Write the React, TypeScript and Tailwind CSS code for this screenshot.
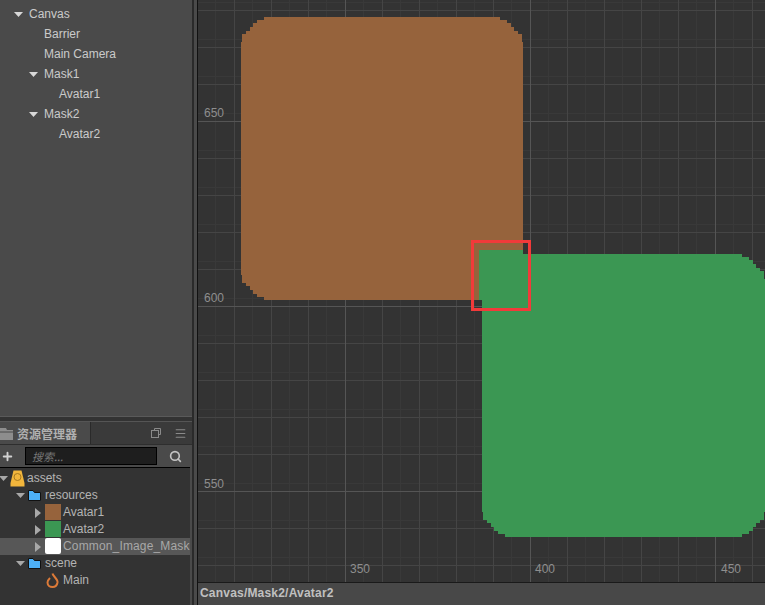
import { Menu, Plus, Search } from 'lucide-react';

const canvasW = 567;
const canvasH = 582;
const left = 198;

// stair offsets of the low-res sprite corner, in screen pixels
const stairs: [number, number][] = [
  [0, 25],
  [1, 17],
  [5, 14],
  [9, 10],
  [12, 6],
  [16, 3],
  [23, 0],
];

const spritePoints = (x: number, y: number, w: number, h: number) => {
  const tl: string[] = [];
  const tr: string[] = [];
  const br: string[] = [];
  const bl: string[] = [];
  stairs.forEach(([dx, dy], i) => {
    const next = stairs[i + 1];
    tl.push(`${x + dx},${y + dy}`);
    tr.push(`${x + w - dx},${y + dy}`);
    br.push(`${x + w - dx},${y + h - dy}`);
    bl.push(`${x + dx},${y + h - dy}`);
    if (next) {
      tl.push(`${x + next[0]},${y + dy}`);
      tr.push(`${x + w - next[0]},${y + dy}`);
      br.push(`${x + w - next[0]},${y + h - dy}`);
      bl.push(`${x + next[0]},${y + h - dy}`);
    }
  });
  return [...tl, ...tr.reverse(), ...br, ...bl.reverse()].join(' ');
};

const range = (start: number, end: number, step: number) => {
  const out: number[] = [];
  for (let v = start; v < end; v += step) out.push(v);
  return out;
};

const SceneDrawing = () => (
  <svg width={canvasW} height={canvasH} viewBox={`${left} 0 ${canvasW} ${canvasH}`} shapeRendering="crispEdges" className="absolute inset-0">
    {range(215.5, 765, 37).map((x) => (
      <line key={`sx${x}`} x1={x} x2={x} y1={0} y2={canvasH} stroke="#393939" />
    ))}
    {range(2.5, 583, 37).map((y) => (
      <line key={`sy${y}`} x1={left} x2={765} y1={y} y2={y} stroke="#393939" />
    ))}
    {range(197, 765, 37).map((x) => (
      <line key={`mx${x}`} x1={x + 37} x2={x + 37} y1={0} y2={canvasH} stroke="#454545" />
    ))}
    {range(10, 583, 37).map((y) => (
      <line key={`my${y}`} x1={left} x2={765} y1={y} y2={y} stroke="#454545" />
    ))}
    {[345, 530, 715].map((x) => (
      <line key={`Mx${x}`} x1={x} x2={x} y1={0} y2={canvasH} stroke="#555555" />
    ))}
    {[121, 306, 491].map((y) => (
      <line key={`My${y}`} x1={left} x2={765} y1={y} y2={y} stroke="#555555" />
    ))}
    <polygon points={spritePoints(241, 17, 282, 283)} fill="#96633c" />
    <polygon points={spritePoints(482, 254, 283, 283)} fill="#3b9753" />
    <rect x={479} y={250} width={44} height={50} fill="#3b9753" />
  </svg>
);

const ArrowDown = ({ className, style }: { className: string; style?: { left: number } }) => (
  <svg width="9" height="5" viewBox="0 0 9 5" className={className} style={style}>
    <path d="M0 0H9L4.5 5Z" fill="currentColor" />
  </svg>
);

const ArrowRight = () => (
  <svg width="6" height="10" viewBox="0 0 6 10" className="absolute left-[35px] top-[4px] text-[#a8a8a8]">
    <path d="M0 0L6 5L0 10Z" fill="currentColor" />
  </svg>
);

const FolderIcon = () => (
  <svg width="13" height="11" viewBox="0 0 13 11" className="absolute left-[28px] top-[3px]">
    <path d="M0.5 10.5V0.5H5L6.5 2.5H12.5V10.5Z" fill="#4db0f7" stroke="#111" />
  </svg>
);

const hierarchy = [
  { label: 'Canvas', indent: 29, open: true },
  { label: 'Barrier', indent: 44 },
  { label: 'Main Camera', indent: 44 },
  { label: 'Mask1', indent: 44, open: true },
  { label: 'Avatar1', indent: 59 },
  { label: 'Mask2', indent: 44, open: true },
  { label: 'Avatar2', indent: 59 },
];

const HierarchyPanel = () => (
  <div className="h-[417px] bg-[#4a4a4a] border-b border-[#5a5a5a] pt-[4px]">
    {hierarchy.map((row) => (
      <div key={row.label} className="relative h-[20px] leading-[20px] text-[12px] text-[#cacaca]" style={{ paddingLeft: row.indent }}>
        {row.open && <ArrowDown className="absolute top-[8px] text-[#d8d8d8]" style={{ left: row.indent - 15 }} />}
        {row.label}
      </div>
    ))}
  </div>
);

const SpriteRow = ({ label, color, selected }: { label: string; color: string; selected?: boolean }) => (
  <div className={`relative h-[17px] leading-[17px] pl-[63px] whitespace-nowrap overflow-hidden ${selected ? 'bg-[#575757] text-[#a8a8a8] tracking-[0.15px]' : ''}`}>
    <ArrowRight />
    <span className={`absolute left-[45px] top-0 w-[16px] h-[16px] ${selected ? 'rounded-[2px]' : ''}`} style={{ backgroundColor: color }} />
    {label}
  </div>
);

const AssetsPanel = () => (
  <div className="flex-1 flex flex-col min-h-0 mt-[4px] bg-[#4a4a4a]">
    <div className="h-[23px] flex bg-[#3a3a3a] border-t border-[#555555]">
      <div className="w-[91px] h-[23px] bg-[#4a4a4a] border-r border-[#2a2a2a] flex items-center gap-[4px] text-[12px] font-bold text-[#b0b0b0] whitespace-nowrap [font-family:'Noto_Sans_CJK_SC','Liberation_Sans',sans-serif]">
        <svg width="13" height="13" viewBox="0 0 13 13">
          <path d="M0 1H6L7 3H13V13H0Z" fill="#8d8d8d" />
          <path d="M0 5H13" stroke="#4a4a4a" />
        </svg>
        资源管理器
      </div>
      <div className="flex-1 flex items-center justify-end gap-[13px] pr-[5px] text-[#8a8a8a]">
        <svg width="10" height="10" viewBox="0 0 10 10" fill="none" stroke="currentColor">
          <path d="M3.5 2.5V0.5H9.5V6.5H7.5" />
          <rect x="0.5" y="2.5" width="7" height="7" />
        </svg>
        <Menu size={13} />
      </div>
    </div>
    <div className="h-[23px] flex items-center bg-[#4a4a4a] pl-[1px] border-t border-[#2e2e2e]">
      <Plus size={13} strokeWidth={3.5} className="text-[#d2d2d2]" />
      <div className="ml-[11px] w-[132px] h-[18px] bg-[#1e1e1e] border border-black px-[6px] leading-[16px] text-[11px] italic text-[#777777] [font-family:'Noto_Sans_CJK_SC',sans-serif]">
        搜索...
      </div>
      <Search size={13} strokeWidth={3} className="ml-[12px] text-[#c4c4c4]" />
    </div>
    <div className="flex-1 bg-[#333333] pt-[2px] mr-[2px] text-[12px] text-[#b4b4b4] border-t border-black overflow-hidden">
      <div className="relative h-[17px] leading-[17px] pl-[27px]">
        <ArrowDown className="absolute left-[-1px] top-[6px] text-[#a8a8a8]" />
        <svg width="15" height="17" viewBox="0 0 15 17" className="absolute left-[10px] top-0">
          <path d="M3.5 0.5H11.5L14.5 13V16.5H0.5V13Z" fill="#f2b63c" />
          <circle cx="7.5" cy="7" r="3.5" fill="none" stroke="#a87a1e" />
        </svg>
        assets
      </div>
      <div className="relative h-[17px] leading-[17px] pl-[45px]">
        <ArrowDown className="absolute left-[16px] top-[6px] text-[#a8a8a8]" />
        <FolderIcon />
        resources
      </div>
      <SpriteRow label="Avatar1" color="#96633c" />
      <SpriteRow label="Avatar2" color="#3b9753" />
      <SpriteRow label="Common_Image_Mask" color="#ffffff" selected />
      <div className="relative h-[17px] leading-[17px] pl-[45px]">
        <ArrowDown className="absolute left-[16px] top-[6px] text-[#a8a8a8]" />
        <FolderIcon />
        scene
      </div>
      <div className="relative h-[17px] leading-[17px] pl-[63px]">
        <svg width="13" height="16" viewBox="0 0 13 16" className="absolute left-[46px] top-0" fill="none" stroke="#dc7a38" strokeWidth="2">
          <path d="M6.5 1.5C7 4.5 12 7 11.5 10.5C11 13.5 9 15 6.5 15C4 15 1.5 13.5 1.5 10.5C1.5 8.5 3 7 4 6" />
        </svg>
        Main
      </div>
    </div>
  </div>
);

const axisLabels = [
  { text: '650', cls: 'left-[6px] top-[105px]' },
  { text: '600', cls: 'left-[6px] top-[290px]' },
  { text: '550', cls: 'left-[6px] top-[476px]' },
  { text: '350', cls: 'left-[152px] top-[561px]' },
  { text: '400', cls: 'left-[337px] top-[561px]' },
  { text: '450', cls: 'left-[523px] top-[561px]' },
];

const App = () => (
  <div className="w-[765px] h-[605px] flex overflow-hidden bg-[#333333] font-['Liberation_Sans',Arial,sans-serif]">
    <div className="w-[192px] flex flex-col shrink-0">
      <HierarchyPanel />
      <AssetsPanel />
    </div>
    <div className="w-[6px] shrink-0 bg-[#4a4a4a] border-l-2 border-r border-l-[#2a2a2a] border-r-[#111111]" />
    <div className="flex-1 flex flex-col min-w-0">
      <div className="relative h-[582px] bg-[#333333] overflow-hidden">
        <SceneDrawing />
        {axisLabels.map((l) => (
          <span key={l.text} className={`absolute ${l.cls} text-[12px] leading-[16px] text-[#8e8e8e]`}>{l.text}</span>
        ))}
        {/* selection frame */}
        <div className="absolute left-[273px] top-[240px] w-[60px] h-[71px] border-[3px] border-[#f23a3a]" />
      </div>
      <div className="h-[23px] bg-[#484848] border-t border-[#1a1a1a] pl-[2px] leading-[21px] text-[12px] font-bold text-[#c0c0c0] tracking-[0.2px]">
        Canvas/Mask2/Avatar2
      </div>
    </div>
  </div>
);

export default App;
